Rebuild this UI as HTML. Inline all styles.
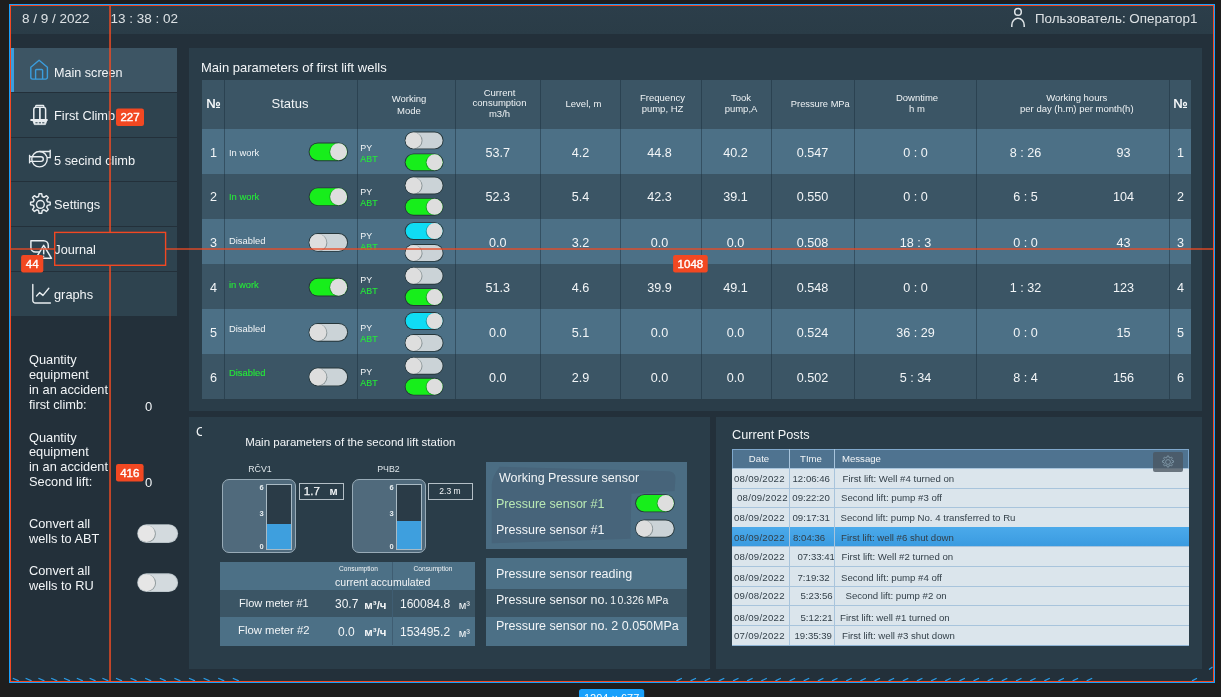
<!DOCTYPE html><html><head><meta charset="utf-8"><title>SCADA</title><style>
*{box-sizing:border-box;margin:0;padding:0}
html,body{width:1221px;height:697px;overflow:hidden;background:#1e1e1e}
#root{position:absolute;left:0;top:0;width:1221px;height:697px;overflow:hidden;will-change:transform}
body{position:relative;font-family:"Liberation Sans",sans-serif;color:#f2f5f7;font-size:13px}
.ab{position:absolute}
.t{position:absolute;white-space:nowrap;line-height:1}
.c{position:absolute;white-space:nowrap;line-height:1;transform:translateX(-50%);text-align:center}
.nav{position:absolute;left:11px;width:166px;height:44px;background:#2e434f}
.nav.act{background:#3d5564}
.nav .lb{position:absolute;left:43px;top:15px;font-size:12.8px;line-height:1;white-space:nowrap}
.badge{position:absolute;background:#f24822;color:#fff;-webkit-text-stroke:.35px #fff;font-size:11.5px;line-height:16px;height:16px;text-align:center;border-radius:2px}
.tg{position:absolute;width:39.5px;height:18px;border-radius:9px;background:#c6ced1;border:1px solid #2a3a3f;box-shadow:0 1px 1px rgba(0,0,0,.35)}
.tg i{position:absolute;top:0;left:0;width:16px;height:16px;border-radius:8px;background:#dcdcdc;box-shadow:1px 0 2px rgba(0,0,0,.45)}
.tg.on{background:#18ea1c}
.tg.cy{background:#12dcf2}
.tg.on i,.tg.cy i{left:22px;box-shadow:-1px 0 2px rgba(0,0,0,.35)}
.hd{font-size:9.5px;line-height:10.8px;color:#eef2f4}
.v{font-size:12.6px}
.s9{font-size:9.4px}
.s8{font-size:8.9px}
.g{color:#25ea38;-webkit-text-stroke:.12px #25ea38}
.vl{position:absolute;width:1px;background:rgba(28,48,62,.5)}
.lr{position:absolute;left:732px;width:457.4px;background:#dbe5ec;border-top:1px solid #a8c4dc;color:#323f48;font-size:9.65px}
.lr span{position:absolute;top:5px;white-space:nowrap;line-height:1}
</style></head><body><div id="root">
<div class="ab" style="left:10px;top:5px;width:1204px;height:677px;background:#23303a"></div>
<div class="ab" style="left:11px;top:6px;width:1202px;height:28px;background:linear-gradient(#2c3e4a,#2a3c47)"></div>
<div class="t" style="left:22px;top:11.9px;font-size:13.5px;color:#dde2e5">8 / 9 / 2022</div>
<div class="t" style="left:110.5px;top:11.9px;font-size:13.5px;color:#dde2e5">13 : 38 : 02</div>
<div class="t" style="left:1035px;top:12.1px;font-size:13.4px;color:#dde2e5">Пользователь: Оператор1</div>
<svg class="ab" style="left:1008px;top:6px" width="20" height="24" viewBox="0 0 20 24" fill="none" stroke="#e0e5e8" stroke-width="1.5"><circle cx="10" cy="5.9" r="3.3"/><path d="M3.8 21v-1.8a6.2 7 0 0 1 12.4 0v1.8"/></svg>
<div class="nav act" style="top:48px;height:44px"><div class="lb" style="top:18.5px"><span style="font-size:12.6px">Main screen</span></div></div>
<div class="nav" style="top:93px;height:43.5px"><div class="lb" style="top:17px">First Climb</div></div>
<div class="nav" style="top:137.5px;height:43.5px"><div class="lb" style="top:17.5px">5 secind climb</div></div>
<div class="nav" style="top:182px;height:44px"><div class="lb" style="top:17px">Settings</div></div>
<div class="nav" style="top:227px;height:43.5px"><div class="lb" style="top:17px"><span style="font-size:12.7px;margin-left:.3px">Journal</span></div></div>
<div class="nav" style="top:271.5px;height:44.5px"><div class="lb" style="top:17px">graphs</div></div>
<div class="ab" style="left:11px;top:48px;width:3px;height:44px;background:#3b9ddd"></div>
<svg class="ab" style="left:28px;top:57px" width="24" height="26" viewBox="0 0 24 26" fill="none" stroke="#3b9ddd" stroke-width="1.4" stroke-linejoin="round"><path d="M2.8 10.2L11.1 3.3L19.4 10.2V20.3a1.8 1.8 0 0 1-1.8 1.8H4.6a1.8 1.8 0 0 1-1.8-1.8Z"/><path d="M7.6 22V13.4a0.9 0.9 0 0 1 .9-.9h5.2a0.9 0.9 0 0 1 .9.9V22"/></svg>
<svg class="ab" style="left:28px;top:102px" width="24" height="26" viewBox="0 0 24 26" fill="none" stroke="#e8edf0" stroke-width="1.5" stroke-linejoin="round"><path d="M7.7 5V4.1a.8.8 0 0 1 .8-.8h6.5a.8.8 0 0 1 .8.8V5" stroke-width="1.2"/><path d="M5.8 17.2V7.4a2.2 2.2 0 0 1 2.2-2.2h7.4a2.2 2.2 0 0 1 2.2 2.2V17.2"/><path d="M11.9 5.5V17" stroke-width="1.7"/><path d="M3.2 18.1H18.9" stroke-width="2" stroke-linecap="round"/><path d="M5 19L6.3 22.6H17.4L18.7 19Z" fill="#e8edf0" stroke-width=".8"/><path d="M7.4 20.8h2.2M10.8 20.8h2.2M14.2 20.8h2.2" stroke="#2e434f" stroke-width="1"/></svg>
<svg class="ab" style="left:26px;top:148.3px" width="28" height="26" viewBox="0 0 28 26" fill="none" stroke="#e8edf0" stroke-width="1.4"><circle cx="13.5" cy="11.2" r="7.7"/><path d="M13.5 3.5H23.6M24.2 1.8V10.2M21 9.6H24.2"/><path d="M3.6 6.8V15.4"/><path d="M3.6 8.8H15a2.3 2.3 0 0 1 0 4.6H3.6"/></svg>
<svg class="ab" style="left:27.6px;top:191.6px" width="24.8" height="24.8" viewBox="0 0 23 23" fill="none" stroke="#e8edf0" stroke-width="1.35" stroke-linejoin="round"><path d="M10.3 1.6h2.4l.5 2.6 1.7.7 2.2-1.5 1.7 1.7-1.5 2.2.7 1.7 2.6.5v2.4l-2.6.5-.7 1.7 1.5 2.2-1.7 1.7-2.2-1.5-1.7.7-.5 2.6h-2.4l-.5-2.6-1.7-.7-2.2 1.5-1.7-1.7 1.5-2.2-.7-1.7-2.6-.5v-2.4l2.6-.5.7-1.7-1.5-2.2 1.7-1.7 2.2 1.5 1.7-.7Z"/><circle cx="11.5" cy="11.5" r="3.6"/></svg>
<svg class="ab" style="left:28.4px;top:236.6px" width="26" height="24" viewBox="0 0 26 24" fill="none" stroke="#e8edf0" stroke-width="1.5" stroke-linejoin="round"><path d="M11.6 15H7.4a4.5 4.5 0 0 1-4.5-4.5V3.8H15.7a4.6 4.6 0 0 1 4.6 4.6V11.6"/><path d="M15.7 8.4L7.8 21.3H23.5Z"/><path d="M15.7 11V17.4" stroke-width="1.5"/><circle cx="15.7" cy="19.3" r=".7" fill="#e8edf0" stroke="none"/></svg>
<svg class="ab" style="left:30px;top:282px" width="24" height="24" viewBox="0 0 24 24" fill="none" stroke="#e8edf0" stroke-width="1.4" stroke-linecap="round" stroke-linejoin="round"><path d="M2.8 2.4V18.4a2.6 2.6 0 0 0 2.6 2.6H20.4"/><path d="M6.6 14L9.6 10.6 13 13.4 18.8 6.2"/></svg>
<div class="ab" style="left:189px;top:48px;width:1013px;height:363px;background:#2a3d49"></div>
<div class="ab" style="left:189px;top:417px;width:520.5px;height:252px;background:#2a3d49"></div>
<div class="ab" style="left:716px;top:417px;width:486px;height:252px;background:#2a3d49"></div>
<div class="t" style="left:201px;top:61px;font-size:13px">Main parameters of first lift wells</div>
<div class="ab" style="left:202px;top:80px;width:989px;height:49px;background:#3b5565"></div>
<div class="ab" style="left:202px;top:129px;width:989px;height:45px;background:#4c7086"></div>
<div class="ab" style="left:202px;top:174px;width:989px;height:45px;background:#3b5565"></div>
<div class="ab" style="left:202px;top:219px;width:989px;height:45px;background:#4c7086"></div>
<div class="ab" style="left:202px;top:264px;width:989px;height:45px;background:#3b5565"></div>
<div class="ab" style="left:202px;top:309px;width:989px;height:45px;background:#4c7086"></div>
<div class="ab" style="left:202px;top:354px;width:989px;height:45px;background:#3b5565"></div>
<div class="vl" style="left:224px;top:80px;height:319px"></div>
<div class="vl" style="left:357px;top:80px;height:319px"></div>
<div class="vl" style="left:455px;top:80px;height:319px"></div>
<div class="vl" style="left:540px;top:80px;height:319px"></div>
<div class="vl" style="left:620px;top:80px;height:319px"></div>
<div class="vl" style="left:701px;top:80px;height:319px"></div>
<div class="vl" style="left:771px;top:80px;height:319px"></div>
<div class="vl" style="left:854px;top:80px;height:319px"></div>
<div class="vl" style="left:976px;top:80px;height:319px"></div>
<div class="vl" style="left:1169px;top:80px;height:319px"></div>
<div class="c" style="left:213.5px;top:97px;font-size:13px;font-weight:bold">№</div>
<div class="c" style="left:1180.5px;top:97px;font-size:13px;font-weight:bold">№</div>
<div class="c" style="left:290px;top:97px;font-size:13px">Status</div>
<div class="c hd" style="left:409px;top:93.2px"><span style="line-height:11.7px">Working<br>Mode</span></div>
<div class="c hd" style="left:499.5px;top:87.5px">Current<br>consumption<br>m3/h</div>
<div class="c hd" style="left:583.5px;top:99px">Level, m</div>
<div class="c hd" style="left:662.5px;top:93px">Frequency<br>pump, HZ</div>
<div class="c hd" style="left:741px;top:93px">Took<br>pump,A</div>
<div class="c hd" style="left:820.3px;top:99px"><span style="font-size:9.3px">Pressure MPa</span></div>
<div class="c hd" style="left:917px;top:93px">Downtime<br>h m</div>
<div class="c hd" style="left:1076.8px;top:93px">Working hours<br>per day (h.m) per month(h)</div>
<div class="c v" style="left:213.5px;top:146.5px">1</div>
<div class="c v" style="left:1180.5px;top:146.5px">1</div>
<div class="t s9" style="left:229px;top:147.5px">In work</div>
<div class="t s8" style="left:360.3px;top:144.3px">PY</div>
<div class="t s8 g" style="left:360.3px;top:155.2px">ABT</div>
<div class="c v" style="left:497.8px;top:146.5px">53.7</div>
<div class="c v" style="left:580.5px;top:146.5px">4.2</div>
<div class="c v" style="left:659.5px;top:146.5px">44.8</div>
<div class="c v" style="left:735.5px;top:146.5px">40.2</div>
<div class="c v" style="left:812.5px;top:146.5px">0.547</div>
<div class="c v" style="left:915.5px;top:146.5px">0 : 0</div>
<div class="c v" style="left:1025.5px;top:146.5px">8 : 26</div>
<div class="c v" style="left:1123.5px;top:146.5px">93</div>
<div class="c v" style="left:213.5px;top:190.8px">2</div>
<div class="c v" style="left:1180.5px;top:190.8px">2</div>
<div class="t s9 g" style="left:229px;top:191.9px">In work</div>
<div class="t s8" style="left:360.3px;top:188.1px">PY</div>
<div class="t s8 g" style="left:360.3px;top:199.0px">ABT</div>
<div class="c v" style="left:497.8px;top:190.8px">52.3</div>
<div class="c v" style="left:580.5px;top:190.8px">5.4</div>
<div class="c v" style="left:659.5px;top:190.8px">42.3</div>
<div class="c v" style="left:735.5px;top:190.8px">39.1</div>
<div class="c v" style="left:812.5px;top:190.8px">0.550</div>
<div class="c v" style="left:915.5px;top:190.8px">0 : 0</div>
<div class="c v" style="left:1025.5px;top:190.8px">6 : 5</div>
<div class="c v" style="left:1123.5px;top:190.8px">104</div>
<div class="c v" style="left:213.5px;top:236.5px">3</div>
<div class="c v" style="left:1180.5px;top:236.5px">3</div>
<div class="t s9" style="left:229px;top:235.6px">Disabled</div>
<div class="t s8" style="left:360.3px;top:232.3px">PY</div>
<div class="t s8 g" style="left:360.3px;top:243.2px">ABT</div>
<div class="c v" style="left:497.8px;top:236.5px">0.0</div>
<div class="c v" style="left:580.5px;top:236.5px">3.2</div>
<div class="c v" style="left:659.5px;top:236.5px">0.0</div>
<div class="c v" style="left:735.5px;top:236.5px">0.0</div>
<div class="c v" style="left:812.5px;top:236.5px">0.508</div>
<div class="c v" style="left:915.5px;top:236.5px">18 : 3</div>
<div class="c v" style="left:1025.5px;top:236.5px">0 : 0</div>
<div class="c v" style="left:1123.5px;top:236.5px">43</div>
<div class="c v" style="left:213.5px;top:281.5px">4</div>
<div class="c v" style="left:1180.5px;top:281.5px">4</div>
<div class="t s9 g" style="left:229px;top:280.4px">in work</div>
<div class="t s8" style="left:360.3px;top:276.2px">PY</div>
<div class="t s8 g" style="left:360.3px;top:287.1px">ABT</div>
<div class="c v" style="left:497.8px;top:281.5px">51.3</div>
<div class="c v" style="left:580.5px;top:281.5px">4.6</div>
<div class="c v" style="left:659.5px;top:281.5px">39.9</div>
<div class="c v" style="left:735.5px;top:281.5px">49.1</div>
<div class="c v" style="left:812.5px;top:281.5px">0.548</div>
<div class="c v" style="left:915.5px;top:281.5px">0 : 0</div>
<div class="c v" style="left:1025.5px;top:281.5px">1 : 32</div>
<div class="c v" style="left:1123.5px;top:281.5px">123</div>
<div class="c v" style="left:213.5px;top:326.5px">5</div>
<div class="c v" style="left:1180.5px;top:326.5px">5</div>
<div class="t s9" style="left:229px;top:323.6px">Disabled</div>
<div class="t s8" style="left:360.3px;top:324.4px">PY</div>
<div class="t s8 g" style="left:360.3px;top:335.3px">ABT</div>
<div class="c v" style="left:497.8px;top:326.5px">0.0</div>
<div class="c v" style="left:580.5px;top:326.5px">5.1</div>
<div class="c v" style="left:659.5px;top:326.5px">0.0</div>
<div class="c v" style="left:735.5px;top:326.5px">0.0</div>
<div class="c v" style="left:812.5px;top:326.5px">0.524</div>
<div class="c v" style="left:915.5px;top:326.5px">36 : 29</div>
<div class="c v" style="left:1025.5px;top:326.5px">0 : 0</div>
<div class="c v" style="left:1123.5px;top:326.5px">15</div>
<div class="c v" style="left:213.5px;top:371.5px">6</div>
<div class="c v" style="left:1180.5px;top:371.5px">6</div>
<div class="t s9 g" style="left:229px;top:368.4px">Disabled</div>
<div class="t s8" style="left:360.3px;top:368.2px">PY</div>
<div class="t s8 g" style="left:360.3px;top:379.1px">ABT</div>
<div class="c v" style="left:497.8px;top:371.5px">0.0</div>
<div class="c v" style="left:580.5px;top:371.5px">2.9</div>
<div class="c v" style="left:659.5px;top:371.5px">0.0</div>
<div class="c v" style="left:735.5px;top:371.5px">0.0</div>
<div class="c v" style="left:812.5px;top:371.5px">0.502</div>
<div class="c v" style="left:915.5px;top:371.5px">5 : 34</div>
<div class="c v" style="left:1025.5px;top:371.5px">8 : 4</div>
<div class="c v" style="left:1123.5px;top:371.5px">156</div>
<div class="t" style="left:29px;top:354.0px;font-size:12.8px">Quantity</div>
<div class="t" style="left:29px;top:368.9px;font-size:12.8px">equipment</div>
<div class="t" style="left:29px;top:383.8px;font-size:12.8px">in an accident</div>
<div class="t" style="left:29px;top:398.7px;font-size:12.8px">first climb:</div>
<div class="t" style="left:145px;top:400px">0</div>
<div class="t" style="left:29px;top:431.5px;font-size:12.8px">Quantity</div>
<div class="t" style="left:29px;top:446.4px;font-size:12.8px">equipment</div>
<div class="t" style="left:29px;top:461.3px;font-size:12.8px">in an accident</div>
<div class="t" style="left:29px;top:476.2px;font-size:12.8px">Second lift:</div>
<div class="t" style="left:145px;top:476px">0</div>
<div class="t" style="left:29px;top:518.0px;font-size:12.8px">Convert all</div>
<div class="t" style="left:29px;top:532.9px;font-size:12.8px">wells to ABT</div>
<div class="t" style="left:29px;top:565.0px;font-size:12.8px">Convert all</div>
<div class="t" style="left:29px;top:579.9px;font-size:12.8px">wells to RU</div>
<div class="ab" style="left:196px;top:425.3px;width:6.3px;height:14px;overflow:hidden"><div class="t" style="left:0;top:0;font-size:13px">C</div></div>
<div class="c" style="left:350.3px;top:436.5px;font-size:11.5px">Main parameters of the second lift station</div>
<div class="c" style="left:260px;top:465.2px;font-size:8.8px;color:#dfe6ea">RČV1</div>
<div class="c" style="left:388.5px;top:465.2px;font-size:8.8px;color:#dfe6ea">РЧВ2</div>
<div class="ab" style="left:222px;top:479px;width:74px;height:74px;border-radius:7px;background:#506a7c;border:1.5px solid #98abb7"></div>
<div class="ab" style="left:266.3px;top:484px;width:25.6px;height:66px;background:#2a3b47;border:1px solid #a9bac4"></div>
<div class="ab" style="left:267.3px;top:524px;width:23.6px;height:25px;background:#3e9fde"></div>
<div class="t" style="left:259.6px;top:484px;font-size:7.5px;font-weight:bold;color:#e8eef1">6</div>
<div class="t" style="left:259.6px;top:510px;font-size:7.5px;font-weight:bold;color:#e8eef1">3</div>
<div class="t" style="left:259.6px;top:543px;font-size:7.5px;font-weight:bold;color:#e8eef1">0</div>
<div class="ab" style="left:352px;top:479px;width:74px;height:74px;border-radius:7px;background:#506a7c;border:1.5px solid #98abb7"></div>
<div class="ab" style="left:396.3px;top:484px;width:25.6px;height:66px;background:#2a3b47;border:1px solid #a9bac4"></div>
<div class="ab" style="left:397.3px;top:521px;width:23.6px;height:28px;background:#3e9fde"></div>
<div class="t" style="left:389.6px;top:484px;font-size:7.5px;font-weight:bold;color:#e8eef1">6</div>
<div class="t" style="left:389.6px;top:510px;font-size:7.5px;font-weight:bold;color:#e8eef1">3</div>
<div class="t" style="left:389.6px;top:543px;font-size:7.5px;font-weight:bold;color:#e8eef1">0</div>
<div class="ab" style="left:299px;top:483px;width:44.5px;height:17px;border:1px solid #b4bfc6"></div>
<div class="t" style="left:303.8px;top:485.3px;font-size:11.6px;-webkit-text-stroke:.25px #f2f5f7">1.7</div>
<div class="t" style="left:329.5px;top:486px;font-size:11px;font-weight:bold">м</div>
<div class="ab" style="left:428px;top:483px;width:44.5px;height:17px;border:1px solid #b4bfc6"></div>
<div class="c" style="left:450px;top:486.7px;font-size:8.5px">2.3 m</div>
<div class="ab" style="left:220px;top:562px;width:254.5px;height:28px;background:#4c7086"></div>
<div class="ab" style="left:220px;top:590px;width:254.5px;height:27px;background:#3b5565"></div>
<div class="ab" style="left:220px;top:617px;width:254.5px;height:28.6px;background:#4c7086"></div>
<div class="vl" style="left:392px;top:562px;height:83px;background:#3f5d72"></div>
<div class="c" style="left:358.5px;top:566px;font-size:6.6px">Consumption</div>
<div class="c" style="left:433px;top:566px;font-size:6.6px">Consumption</div>
<div class="c" style="left:382.7px;top:576.5px;font-size:10.5px">current accumulated</div>
<div class="t" style="left:239px;top:597.7px;font-size:11px">Flow meter #1</div>
<div class="t" style="left:238px;top:625px;font-size:11.3px">Flow meter #2</div>
<div class="t" style="left:335px;top:598px;font-size:12px">30.7</div>
<div class="t" style="left:338px;top:626px;font-size:12px">0.0</div>
<div class="t" style="left:364.3px;top:599.8px;font-size:11.5px;font-weight:bold">м³/ч</div>
<div class="t" style="left:364.3px;top:627px;font-size:11.5px;font-weight:bold">м³/ч</div>
<div class="t" style="left:400px;top:597.5px;font-size:12px">160084.8</div>
<div class="t" style="left:400px;top:626px;font-size:12px">153495.2</div>
<div class="t" style="left:458.7px;top:600px;font-size:11px">м³</div>
<div class="t" style="left:458.7px;top:628px;font-size:11px">м³</div>
<div class="ab" style="left:486px;top:462px;width:201px;height:87px;background:#4b6d83"></div>
<svg class="ab" style="left:486px;top:462px" width="201" height="87" viewBox="486 462 201 87"><path d="M499.8 466.7L669.2 471.2Q675 472 675.5 477.5L674.6 491L631.4 493.7L630.5 538.8L491.7 543.3V485.6Q492 476 499.8 466.7Z" fill="#47647a"/></svg>
<div class="t" style="left:499px;top:472.2px;font-size:12.5px">Working Pressure sensor</div>
<div class="t" style="left:496px;top:498.2px;font-size:12.5px;color:#b9e8b4">Pressure sensor #1</div>
<div class="t" style="left:496px;top:524.2px;font-size:12.5px">Pressure sensor #1</div>
<div class="ab" style="left:486px;top:558px;width:201px;height:31px;background:#4c7086"></div>
<div class="ab" style="left:486px;top:589px;width:201px;height:28px;background:#3b5565"></div>
<div class="ab" style="left:486px;top:617px;width:201px;height:28.5px;background:#4c7086"></div>
<div class="t" style="left:496px;top:567.8px;font-size:12.5px">Pressure sensor reading</div>
<div class="t" style="left:496px;top:594.1px;font-size:12.5px">Pressure sensor no. <span style="font-size:10.3px;position:relative;top:-.3px;margin-left:-1px">1</span><span style="font-size:10.5px;position:relative;top:-.3px;margin-left:1.5px">0.326 MPa</span></div>
<div class="t" style="left:496px;top:619.8px;font-size:12.5px">Pressure sensor no. 2 0.050MPa</div>
<div class="t" style="left:732px;top:429.3px;font-size:12.7px">Current Posts</div>
<div class="ab" style="left:732px;top:449px;width:457.4px;height:196.5px;background:#dbe5ec;border:1px solid #8fb4d4"></div>
<div class="ab" style="left:732px;top:449px;width:457.4px;height:19.5px;background:#4f7390;border:1px solid #7fa8cc"></div>
<div class="c" style="left:759px;top:454px;font-size:9.6px">Date</div>
<div class="c" style="left:811px;top:454px;font-size:9.6px">TIme</div>
<div class="t" style="left:842px;top:454px;font-size:9.6px">Message</div>
<div class="lr" style="top:468px;height:19.5px;"><span style="left:2px;top:4.6px;letter-spacing:.26px">08/09/2022</span><span style="left:60.5px;top:4.6px">12:06:46</span><span style="left:110.5px;top:4.6px">First lift: Well #4 turned on</span></div>
<div class="lr" style="top:487.5px;height:19.5px;"><span style="left:5px;top:4.2px;letter-spacing:.26px">08/09/2022</span><span style="left:60.299999999999955px;top:4.2px">09:22:20</span><span style="left:109px;top:4.2px">Second lift: pump #3 off</span></div>
<div class="lr" style="top:507px;height:20px;"><span style="left:2px;top:5px;letter-spacing:.26px">08/09/2022</span><span style="left:60.5px;top:5px">09:17:31</span><span style="left:108.5px;top:5px">Second lift: pump No. 4 transferred to Ru</span></div>
<div class="lr" style="top:527px;height:19px;background:linear-gradient(#4aa9ea,#3a9be0);border-top-color:#4aa9ea;"><span style="left:2px;top:5px;letter-spacing:.26px">08/09/2022</span><span style="left:61px;top:5px">8:04:36</span><span style="left:109px;top:5px">First lift: well #6 shut down</span></div>
<div class="lr" style="top:546px;height:20px;"><span style="left:2px;top:5px;letter-spacing:.26px">08/09/2022</span><span style="left:65.5px;top:5px">07:33:41</span><span style="left:109.5px;top:5px">First lift: Well #2 turned on</span></div>
<div class="lr" style="top:566px;height:20px;"><span style="left:2px;top:5.8px;letter-spacing:.26px">08/09/2022</span><span style="left:65.5px;top:5.8px">7:19:32</span><span style="left:109px;top:5.8px">Second lift: pump #4 off</span></div>
<div class="lr" style="top:586px;height:19px;"><span style="left:2px;top:3.8px;letter-spacing:.26px">09/08/2022</span><span style="left:68.5px;top:3.8px">5:23:56</span><span style="left:113.5px;top:3.8px">Second lift: pump #2 on</span></div>
<div class="lr" style="top:605px;height:20px;"><span style="left:2px;top:7px;letter-spacing:.26px">08/09/2022</span><span style="left:68.5px;top:7px">5:12:21</span><span style="left:108px;top:7px">First lift: well #1 turned on</span></div>
<div class="lr" style="top:625px;height:20px;"><span style="left:2px;top:5px;letter-spacing:.26px">07/09/2022</span><span style="left:62.5px;top:5px">19:35:39</span><span style="left:110px;top:5px">First lift: well #3 shut down</span></div>
<div class="vl" style="left:789px;top:449px;height:196px;background:#a8c4dc"></div>
<div class="vl" style="left:834px;top:449px;height:196px;background:#a8c4dc"></div>
<div class="ab" style="left:1153px;top:452px;width:30px;height:20px;background:rgba(74,86,96,.78);border-radius:2px"></div>
<svg class="ab" style="left:1160.7px;top:455.1px" width="14" height="14" viewBox="0 0 23 23" fill="none" stroke="#8199a8" stroke-width="1.5" stroke-linejoin="round"><path d="M10.3 1.6h2.4l.5 2.6 1.7.7 2.2-1.5 1.7 1.7-1.5 2.2.7 1.7 2.6.5v2.4l-2.6.5-.7 1.7 1.5 2.2-1.7 1.7-2.2-1.5-1.7.7-.5 2.6h-2.4l-.5-2.6-1.7-.7-2.2 1.5-1.7-1.7 1.5-2.2-.7-1.7-2.6-.5v-2.4l2.6-.5.7-1.7-1.5-2.2 1.7-1.7 2.2 1.5 1.7-.7Z"/><circle cx="11.5" cy="11.5" r="4"/></svg>
<svg class="ab" style="left:0;top:0" width="1221" height="697" viewBox="0 0 1221 697"><rect x="308.6" y="142.5" width="39.4" height="18.7" rx="9.35" fill="#26363a"/><rect x="309.5" y="143.4" width="37.6" height="16.9" rx="8.45" fill="#17ee1b"/><circle cx="337.8" cy="152.2" r="8.45" fill="#1a2a2a" opacity=".38"/><circle cx="338.6" cy="151.8" r="8.45" fill="#dedede"/><rect x="404.7" y="131.5" width="38.8" height="17.8" rx="8.90" fill="#26363a"/><rect x="405.6" y="132.4" width="37.0" height="16.0" rx="8.00" fill="#cbd3d7"/><circle cx="414.5" cy="140.7" r="8.00" fill="#1a2a2a" opacity=".38"/><circle cx="413.6" cy="140.4" r="8.00" fill="#dedede"/><rect x="404.7" y="153.4" width="38.8" height="17.8" rx="8.90" fill="#26363a"/><rect x="405.6" y="154.3" width="37.0" height="16.0" rx="8.00" fill="#17ee1b"/><circle cx="433.7" cy="162.6" r="8.00" fill="#1a2a2a" opacity=".38"/><circle cx="434.6" cy="162.3" r="8.00" fill="#dedede"/><rect x="308.6" y="187.4" width="39.4" height="18.7" rx="9.35" fill="#26363a"/><rect x="309.5" y="188.3" width="37.6" height="16.9" rx="8.45" fill="#17ee1b"/><circle cx="337.8" cy="197.1" r="8.45" fill="#1a2a2a" opacity=".38"/><circle cx="338.6" cy="196.8" r="8.45" fill="#dedede"/><rect x="404.7" y="176.6" width="38.8" height="17.8" rx="8.90" fill="#26363a"/><rect x="405.6" y="177.5" width="37.0" height="16.0" rx="8.00" fill="#cbd3d7"/><circle cx="414.5" cy="185.8" r="8.00" fill="#1a2a2a" opacity=".38"/><circle cx="413.6" cy="185.5" r="8.00" fill="#dedede"/><rect x="404.7" y="197.9" width="38.8" height="17.8" rx="8.90" fill="#26363a"/><rect x="405.6" y="198.8" width="37.0" height="16.0" rx="8.00" fill="#17ee1b"/><circle cx="433.7" cy="207.1" r="8.00" fill="#1a2a2a" opacity=".38"/><circle cx="434.6" cy="206.8" r="8.00" fill="#dedede"/><rect x="308.6" y="233.1" width="39.4" height="18.7" rx="9.35" fill="#26363a"/><rect x="309.5" y="234.0" width="37.6" height="16.9" rx="8.45" fill="#cbd3d7"/><circle cx="318.9" cy="242.8" r="8.45" fill="#1a2a2a" opacity=".38"/><circle cx="318.0" cy="242.4" r="8.45" fill="#dedede"/><rect x="404.7" y="222.2" width="38.8" height="17.8" rx="8.90" fill="#26363a"/><rect x="405.6" y="223.1" width="37.0" height="16.0" rx="8.00" fill="#10dcf4"/><circle cx="433.7" cy="231.4" r="8.00" fill="#1a2a2a" opacity=".38"/><circle cx="434.6" cy="231.1" r="8.00" fill="#dedede"/><rect x="404.7" y="244.0" width="38.8" height="17.8" rx="8.90" fill="#26363a"/><rect x="405.6" y="244.9" width="37.0" height="16.0" rx="8.00" fill="#cbd3d7"/><circle cx="414.5" cy="253.2" r="8.00" fill="#1a2a2a" opacity=".38"/><circle cx="413.6" cy="252.9" r="8.00" fill="#dedede"/><rect x="308.6" y="277.8" width="39.4" height="18.7" rx="9.35" fill="#26363a"/><rect x="309.5" y="278.7" width="37.6" height="16.9" rx="8.45" fill="#17ee1b"/><circle cx="337.8" cy="287.5" r="8.45" fill="#1a2a2a" opacity=".38"/><circle cx="338.6" cy="287.2" r="8.45" fill="#dedede"/><rect x="404.7" y="266.9" width="38.8" height="17.8" rx="8.90" fill="#26363a"/><rect x="405.6" y="267.8" width="37.0" height="16.0" rx="8.00" fill="#cbd3d7"/><circle cx="414.5" cy="276.1" r="8.00" fill="#1a2a2a" opacity=".38"/><circle cx="413.6" cy="275.8" r="8.00" fill="#dedede"/><rect x="404.7" y="288.2" width="38.8" height="17.8" rx="8.90" fill="#26363a"/><rect x="405.6" y="289.1" width="37.0" height="16.0" rx="8.00" fill="#17ee1b"/><circle cx="433.7" cy="297.4" r="8.00" fill="#1a2a2a" opacity=".38"/><circle cx="434.6" cy="297.1" r="8.00" fill="#dedede"/><rect x="308.6" y="323.0" width="39.4" height="18.7" rx="9.35" fill="#26363a"/><rect x="309.5" y="323.9" width="37.6" height="16.9" rx="8.45" fill="#cbd3d7"/><circle cx="318.9" cy="332.7" r="8.45" fill="#1a2a2a" opacity=".38"/><circle cx="318.0" cy="332.4" r="8.45" fill="#dedede"/><rect x="404.7" y="312.1" width="38.8" height="17.8" rx="8.90" fill="#26363a"/><rect x="405.6" y="313.0" width="37.0" height="16.0" rx="8.00" fill="#10dcf4"/><circle cx="433.7" cy="321.3" r="8.00" fill="#1a2a2a" opacity=".38"/><circle cx="434.6" cy="321.0" r="8.00" fill="#dedede"/><rect x="404.7" y="334.0" width="38.8" height="17.8" rx="8.90" fill="#26363a"/><rect x="405.6" y="334.9" width="37.0" height="16.0" rx="8.00" fill="#cbd3d7"/><circle cx="414.5" cy="343.2" r="8.00" fill="#1a2a2a" opacity=".38"/><circle cx="413.6" cy="342.9" r="8.00" fill="#dedede"/><rect x="308.6" y="367.6" width="39.4" height="18.7" rx="9.35" fill="#26363a"/><rect x="309.5" y="368.5" width="37.6" height="16.9" rx="8.45" fill="#cbd3d7"/><circle cx="318.9" cy="377.3" r="8.45" fill="#1a2a2a" opacity=".38"/><circle cx="318.0" cy="377.0" r="8.45" fill="#dedede"/><rect x="404.7" y="356.9" width="38.8" height="17.8" rx="8.90" fill="#26363a"/><rect x="405.6" y="357.8" width="37.0" height="16.0" rx="8.00" fill="#cbd3d7"/><circle cx="414.5" cy="366.1" r="8.00" fill="#1a2a2a" opacity=".38"/><circle cx="413.6" cy="365.8" r="8.00" fill="#dedede"/><rect x="404.7" y="377.8" width="38.8" height="17.8" rx="8.90" fill="#26363a"/><rect x="405.6" y="378.7" width="37.0" height="16.0" rx="8.00" fill="#17ee1b"/><circle cx="433.7" cy="387.0" r="8.00" fill="#1a2a2a" opacity=".38"/><circle cx="434.6" cy="386.7" r="8.00" fill="#dedede"/><rect x="137.2" y="524.2" width="40.9" height="18.7" rx="9.35" fill="#b9c3c8"/><rect x="138.1" y="525.1" width="39.1" height="16.9" rx="8.45" fill="#d3dade"/><circle cx="147.4" cy="533.9" r="8.45" fill="#1a2a2a" opacity=".38"/><circle cx="146.5" cy="533.6" r="8.45" fill="#e6e6e6"/><rect x="137.2" y="573.3" width="40.9" height="18.8" rx="9.40" fill="#b9c3c8"/><rect x="138.1" y="574.2" width="39.1" height="17.0" rx="8.50" fill="#d3dade"/><circle cx="147.5" cy="583.0" r="8.50" fill="#1a2a2a" opacity=".38"/><circle cx="146.6" cy="582.7" r="8.50" fill="#e6e6e6"/><rect x="635.2" y="494.2" width="39.5" height="18.1" rx="9.05" fill="#26363a"/><rect x="636.1" y="495.1" width="37.7" height="16.3" rx="8.15" fill="#17ee1b"/><circle cx="664.8" cy="503.6" r="8.15" fill="#1a2a2a" opacity=".38"/><circle cx="665.7" cy="503.2" r="8.15" fill="#dedede"/><rect x="635.2" y="519.6" width="39.5" height="18.0" rx="9.00" fill="#26363a"/><rect x="636.1" y="520.5" width="37.7" height="16.2" rx="8.10" fill="#cbd3d7"/><circle cx="645.1" cy="528.9" r="8.10" fill="#1a2a2a" opacity=".38"/><circle cx="644.2" cy="528.6" r="8.10" fill="#dedede"/></svg>
<svg class="ab" style="left:0;top:0" width="1221" height="697" viewBox="0 0 1221 697" font-family="Liberation Sans, sans-serif"><path d="M12.8 678.3l6 2.6M25.6 678.3l6 2.6M38.4 678.3l6 2.6M51.2 678.3l6 2.6M64.0 678.3l6 2.6M76.8 678.3l6 2.6M89.6 678.3l6 2.6M102.4 678.3l6 2.6M116.0 678.3l6 2.6M130.6 678.3l6 2.6M145.2 678.3l6 2.6M159.8 678.3l6 2.6M174.4 678.3l6 2.6M189.0 678.3l6 2.6M203.6 678.3l6 2.6M218.2 678.3l6 2.6M232.8 678.3l6 2.6M676.4 680.9l5.5-2.6M690.5 680.9l5.5-2.6M704.7 680.9l5.5-2.6M718.8 680.9l5.5-2.6M733.0 680.9l5.5-2.6M747.1 680.9l5.5-2.6M761.3 680.9l5.5-2.6M775.4 680.9l5.5-2.6M789.6 680.9l5.5-2.6M803.7 680.9l5.5-2.6M817.9 680.9l5.5-2.6M832.0 680.9l5.5-2.6M846.2 680.9l5.5-2.6M860.3 680.9l5.5-2.6M874.5 680.9l5.5-2.6M888.6 680.9l5.5-2.6M902.8 680.9l5.5-2.6M916.9 680.9l5.5-2.6M931.1 680.9l5.5-2.6M945.2 680.9l5.5-2.6M959.4 680.9l5.5-2.6M973.5 680.9l5.5-2.6M987.7 680.9l5.5-2.6M1001.8 680.9l5.5-2.6M1016.0 680.9l5.5-2.6M1030.1 680.9l5.5-2.6M1044.3 680.9l5.5-2.6M1058.4 680.9l5.5-2.6M1072.6 680.9l5.5-2.6M1086.7 680.9l5.5-2.6M1192 680.9l5-2.6M1209 669.5l3.5-2.5" stroke="#2b9be6" stroke-width="1.25" fill="none"/><rect x="9.5" y="4.5" width="1205" height="678" fill="none" stroke="#18a0fb" stroke-width="1"/><rect x="10.5" y="5.5" width="1203" height="676" fill="none" stroke="#f24822" stroke-width="1"/><path d="M110.05 6V232.4M110.05 265.3V681" stroke="#ea4a24" stroke-width="1.75" opacity=".88" fill="none"/><path d="M11 249H54.7M165.6 249H1213" stroke="#ea4a24" stroke-width="1.5" opacity=".9" fill="none"/><rect x="54.7" y="232.4" width="110.9" height="32.9" fill="none" stroke="#f24822" stroke-width="1.4"/><rect x="116" y="108.5" width="28" height="17.4" rx="2.2" fill="#f24822"/><text x="130.0" y="121.3" font-size="11.5" fill="#fff" stroke="#fff" stroke-width=".4" text-anchor="middle">227</text><rect x="21.1" y="255.1" width="22.2" height="17.4" rx="2.2" fill="#f24822"/><text x="32.2" y="267.9" font-size="11.5" fill="#fff" stroke="#fff" stroke-width=".4" text-anchor="middle">44</text><rect x="673.1" y="255" width="34.6" height="17.4" rx="2.2" fill="#f24822"/><text x="690.4" y="267.8" font-size="11.5" fill="#fff" stroke="#fff" stroke-width=".4" text-anchor="middle">1048</text><rect x="116" y="464" width="27.6" height="17.4" rx="2.2" fill="#f24822"/><text x="129.8" y="476.8" font-size="11.5" fill="#fff" stroke="#fff" stroke-width=".4" text-anchor="middle">416</text><rect x="579" y="689" width="65.2" height="18" rx="2.5" fill="#18a0fb"/><text x="611.6" y="701.8" font-size="11" fill="#fff" text-anchor="middle">1204 × 677</text></svg>
</div></body></html>
